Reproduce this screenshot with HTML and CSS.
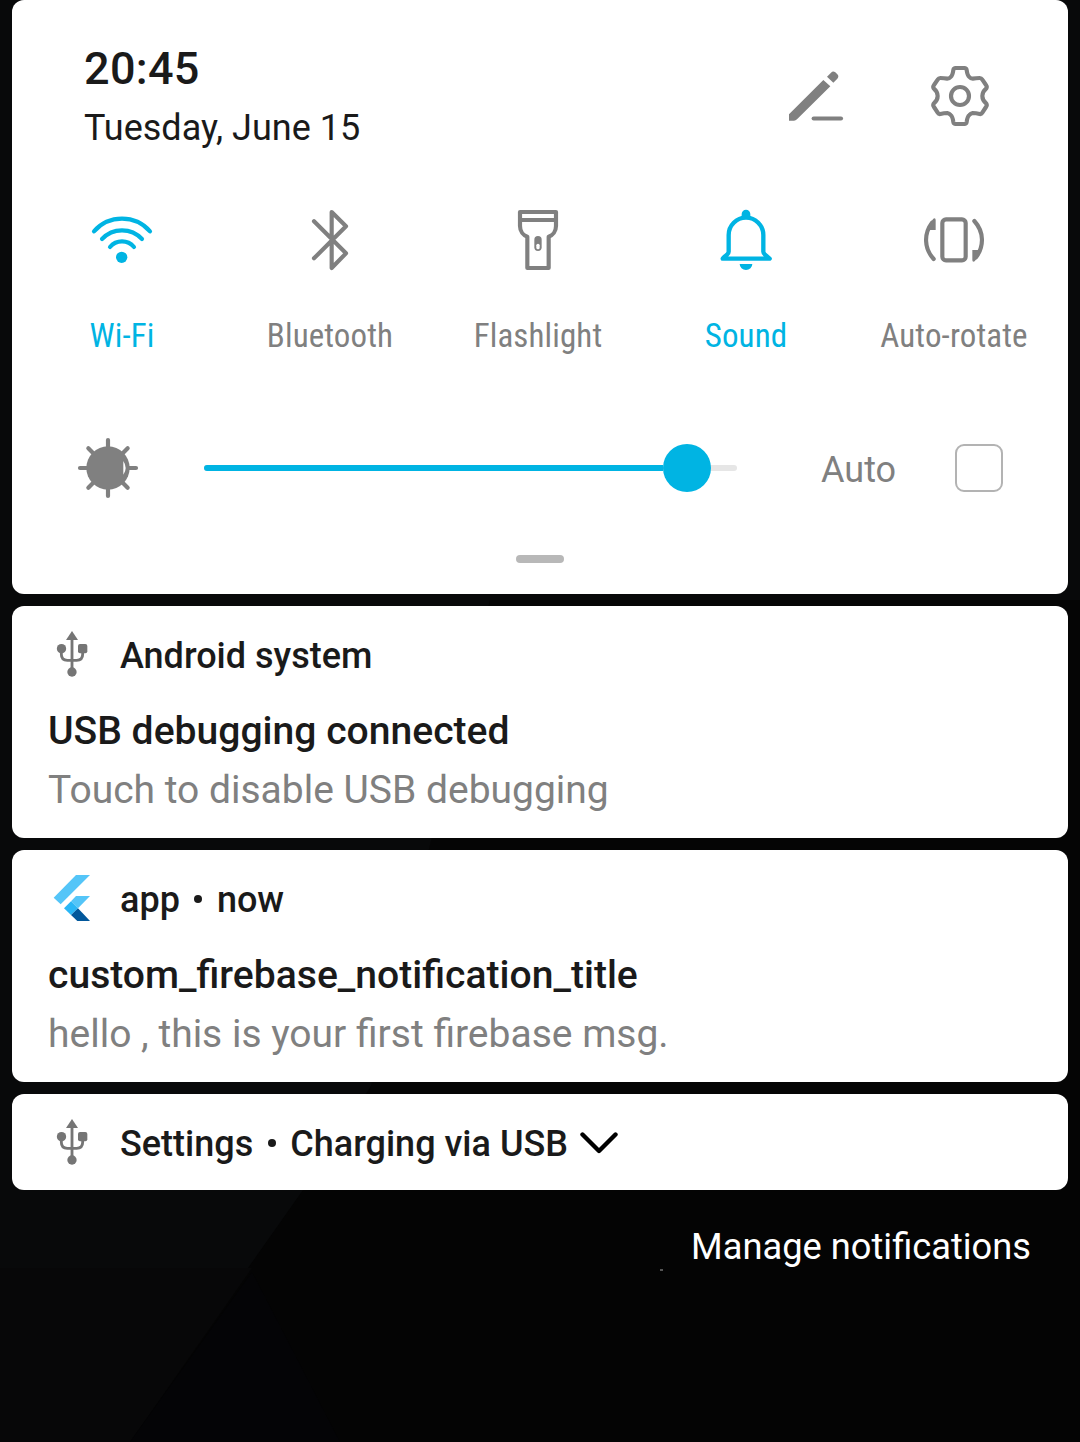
FILE: index.html
```html
<!DOCTYPE html>
<html lang="en">
<head>
<meta charset="utf-8">
<title>Notification shade</title>
<link rel="stylesheet" href="styles.css">
</head>
<body>
<svg class="wallpaper" viewBox="0 0 1080 1442" aria-hidden="true">
  <rect width="1080" height="1442" fill="#040404"/>
  <path d="M0 0H1080V900H490L375 1080 303 1190 248 1268 0 1268z" fill="#08090a"/>
  <path d="M0 1268H252L130 1442H0z" fill="#070708"/>
  <path d="M252 1272L340 1442H130z" fill="#040406"/>
  <path d="M490 600H1080V1090H370z" fill="#050505"/>
  <rect x="660" y="1269" width="3" height="2" fill="#555"/>
</svg>
<svg width="0" height="0" class="defs" aria-hidden="true">
  <symbol id="usb" viewBox="24 30 144 144">
    <path d="M96 33L78 60H114z"/>
    <path d="M96 55V150M64 90V103q0 18 18 18H110q18 0 18-18V90" fill="none" stroke="currentColor" stroke-width="8.5"/>
    <circle cx="64.500" cy="86" r="14"/><rect x="114" y="72" width="28" height="28" rx="6"/><circle cx="96" cy="156" r="14"/>
  </symbol>
</svg>
<main class="shade">
  <section class="card quick">
    <header class="top">
      <div class="clock"><div class="time">20:45</div><div class="date">Tuesday, June 15</div></div>
      <div class="actions">
        <svg class="icon" viewBox="30 30 216 216"><path d="M57 193L160 90 181 109 81 208Q77 212 72 212H57z"/><path d="M171 80L183 68Q189 61 196 67L202 73Q208 79 202 86L190 98z"/><path class="line" d="M131 205.500H213"/></svg>
        <svg class="icon" viewBox="462 30 216 216"><path class="line" d="M557 54H583Q589 54 590 60Q592 76 598 81Q602 86 608 86Q618 84 629 84Q634 84 637 89L648 105Q652 110 649 115Q637 125 637 138Q637 151 649 161Q652 166 648 171L637 188Q634 193 629 192Q618 189 608 189Q602 190 598 195Q592 200 590 216Q589 222 583 222H557Q551 222 550 216Q548 200 542 195Q538 190 532 189Q522 189 511 192Q506 193 503 188L492 171Q488 166 491 161Q503 151 503 138Q503 125 491 115Q488 110 492 105L503 89Q506 84 511 84Q522 84 532 86Q538 86 542 81Q548 76 550 60Q551 54 557 54z"/><circle class="line" cx="570" cy="138" r="27"/></svg>
      </div>
    </header>
    <div class="tiles">
      <div class="tile on"><svg class="icon" viewBox="18 12 216 216"><path class="line" d="M42 94A112 112 0 0 1 210 94M66 117A82 82 0 0 1 186 117M90 141A47 47 0 0 1 162 141"/><circle cx="125" cy="172" r="17"/></svg><span class="label">Wi-Fi</span></div>
      <div class="tile"><svg class="icon" viewBox="642 12 216 216"><path class="line" d="M702 64L798 160 755 204V36L798 79 702 175"/></svg><span class="label">Bluetooth</span></div>
      <div class="tile"><svg class="icon" viewBox="126 12 216 216"><path class="line" d="M180 36H288V78C288 94 278 106 266 110V204H202V110C190 106 180 94 180 78zM180 60H288"/><rect x="223" y="108" width="22" height="45" rx="11"/><rect x="229" y="131" width="10" height="17" rx="5" fill="#fff"/></svg><span class="label">Flashlight</span></div>
      <div class="tile on"><svg class="icon" viewBox="750 12 216 216"><path class="line bell" d="M806 105A52 52 0 0 1 910 105V155C910 163 921 167 929 176H788C796 167 806 163 806 155z"/><path d="M845 50V42A13 13 0 0 1 871 42V50zM839 192H877A19 18 0 0 1 839 192z"/></svg><span class="label">Sound</span></div>
      <div class="tile"><svg class="icon" viewBox="144 12 216 216"><rect class="line" x="217" y="58" width="70" height="123" rx="11"/><path class="line" d="M191 177C162 145 161 101 186 68M313 63C342 95 343 139 318 172"/><path d="M178 72L190 56Q197 53 197 60V90H179zM326 168L314 184Q307 187 307 180V150H325z"/></svg><span class="label">Auto-rotate</span></div>
    </div>
    <div class="brightness">
      <svg class="icon" viewBox="6 6 216 216"><circle cx="114" cy="114" r="65"/><path class="line" d="M114 30V55M114 173V198M30 114H55M173 114H198M55 55L72 72M156 156L173 173M173 55L156 72M72 156L55 173"/><path d="M160 93Q174 114 160 134z" fill="#fff"/></svg>
      <div class="slider"><div class="fill"></div><div class="thumb"></div></div>
      <span class="auto">Auto</span><span class="check"></span>
    </div>
    <div class="handle"></div>
  </section>

  <section class="card note">
    <div class="head"><svg class="app"><use href="#usb"/></svg><span>Android system</span></div>
    <div class="title">USB debugging connected</div>
    <div class="body">Touch to disable USB debugging</div>
  </section>
  <section class="card note">
    <div class="head"><svg class="app" viewBox="24 30 144 144"><path d="M108 33H150L62 121 41 101zM108 96H150L114 133 93 112z" fill="#54c5f8"/><path d="M93 112L114 133 93 153 72 133z" fill="#29b6f6"/><path d="M93 153L114 133 150 171H112z" fill="#01579b"/></svg><span>app<i class="dot"></i>now</span></div>
    <div class="title">custom_firebase_notification_title</div>
    <div class="body">hello , this is your first firebase msg.</div>
  </section>
  <section class="card note">
    <div class="head"><svg class="app"><use href="#usb"/></svg><span>Settings<i class="dot"></i>Charging via USB</span><svg class="chevron" viewBox="0 0 38 24"><path d="M2.500 3.500L19 20 35.500 3.500"/></svg></div>
  </section>
  <div class="manage">Manage notifications</div>
</main>
</body>
</html>
```

FILE: styles.css
```css
* { box-sizing: border-box; }
body { margin: 0; width: 1080px; height: 1442px; overflow: hidden; background: #050505; color: #1a1a1a; font-family: Roboto, "Liberation Sans", sans-serif; }
.wallpaper { position: absolute; inset: 0; width: 1080px; height: 1442px; z-index: -1; }
.defs { position: absolute; }
.shade { display: flex; flex-direction: column; gap: 12px; padding: 0 12px; }
.card { background: #fff; border-radius: 12px; }
.quick { height: 594px; padding: 0 6px; display: flex; flex-direction: column; }
.icon { width: 72px; height: 72px; fill: currentColor; flex: none; }
.line { fill: none; stroke: currentColor; stroke-width: 12.5; stroke-linecap: round; stroke-linejoin: round; }
.bell { stroke-width: 13; }
.top { display: flex; justify-content: space-between; height: 204px; padding: 0 66px; }
.time { font-size: 45px; font-weight: 500; line-height: 54px; margin-top: 42px; letter-spacing: 0.3px; }
.date { font-size: 36px; line-height: 42px; margin-top: 11px; white-space: nowrap; }
.actions { display: flex; gap: 72px; margin-top: 60px; color: #808080; }
.tiles { display: grid; grid-template-columns: repeat(5, 208px); height: 228px; }
.tile { display: flex; flex-direction: column; align-items: center; color: #808080; }
.on { color: #00b4e3; }
.label { font-family: "Roboto Condensed", Roboto, sans-serif; font-stretch: 75%; font-size: 33px; line-height: 40px; margin-top: 40px; white-space: nowrap; letter-spacing: 0.12px; }
.brightness { display: flex; align-items: center; height: 72px; padding-left: 54px; color: #808080; }
.slider { width: 533px; height: 6px; border-radius: 3px; background: #e6e6e6; margin-left: 60px; display: flex; align-items: center; }
.fill { width: 459px; height: 6px; border-radius: 3px 0 0 3px; background: #00b4e3; }
.thumb { width: 48px; height: 48px; border-radius: 50%; background: #00b4e3; flex: none; }
.auto { font-size: 36px; line-height: 42px; width: 134px; margin: 4px 0 0 84px; }
.check { width: 48px; height: 48px; border: 2px solid #b3b3b3; border-radius: 9px; }
.handle { width: 48px; height: 8px; border-radius: 4px; background: #b8b8b8; margin: 51px auto 0; }
.note { padding: 0 36px; height: 232px; }
.note:last-of-type { height: 96px; }
.head { display: flex; align-items: center; height: 96px; font-size: 36px; font-weight: 500; line-height: 42px; padding-top: 4px; white-space: nowrap; }
.app { width: 48px; height: 48px; margin: -4px 24px 0 0; fill: currentColor; color: #757575; }
.dot { display: inline-block; width: 8px; height: 8px; border-radius: 50%; background: currentColor; vertical-align: 9px; margin: 0 14.5px; }
.chevron { width: 38px; height: 24px; margin: -3px 0 0 12px; fill: none; stroke: #000; stroke-width: 4.4; stroke-linecap: round; stroke-linejoin: round; }
.title { font-size: 39.1px; font-weight: 500; line-height: 46px; margin-top: 6px; white-space: nowrap; }
.body { font-size: 39px; line-height: 46px; margin-top: 13px; color: #808080; white-space: nowrap; }
.manage { color: #fff; font-size: 36.25px; line-height: 42px; text-align: right; padding: 24px 25px 0 0; margin-right: 12px; }
```
